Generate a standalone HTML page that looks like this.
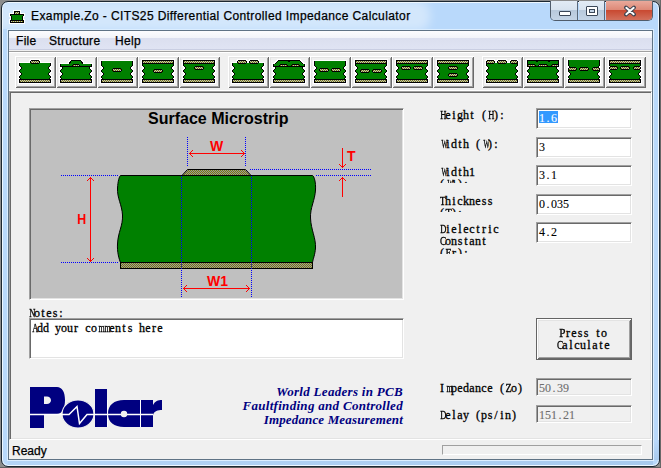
<!DOCTYPE html>
<html><head><meta charset="utf-8"><style>
*{margin:0;padding:0;box-sizing:border-box}
html,body{width:661px;height:468px;overflow:hidden}
body{position:relative;background:#8c8c8c;font-family:"Liberation Sans",sans-serif;}
.a{position:absolute}
.ss{position:absolute;font-family:"Liberation Serif",serif;font-size:12px;line-height:12px;white-space:pre;color:#000;margin-top:-1px;margin-left:-1px;-webkit-text-stroke:0.3px currentColor}
.ss b{display:inline-block;width:6px;text-align:center;font-weight:normal}
.ss i{display:inline-block;font-style:normal}
.tb{position:absolute;background:#fff;border-top:1px solid #a0a0a0;border-left:1px solid #a0a0a0;border-right:1px solid #fff;border-bottom:1px solid #fff;box-shadow:inset 1px 1px 0 #696969, inset -1px -1px 0 #e3e3e3}
.btn{position:absolute;top:56px;width:41px;height:32px;background:#f0f0f0;box-shadow:inset 1px 1px 0 #fff, inset -1px -1px 0 #696969, inset 2px 2px 0 #e3e3e3, inset -2px -2px 0 #a0a0a0}
.btn svg{position:absolute;left:0;top:0}
</style></head><body>

<div class="a" style="left:660px;top:0;width:1px;height:468px;background:#686868"></div>
<div class="a" style="left:0;top:467px;width:661px;height:1px;background:#606060"></div>
<div class="a" style="left:1px;top:1px;width:659px;height:466px;border:1px solid #1c2731;border-radius:7px;background:#b9d9fb;box-shadow:inset 0 0 0 1px #eef7ff"></div>
<div class="a" style="left:653px;top:440px;width:6px;height:20px;background:linear-gradient(#b9d9fb,#a8caee)"></div>
<div class="a" style="left:8px;top:460px;width:645px;height:5px;background:linear-gradient(to right,#b4d4f6,#a8caee)"></div>
<div class="a" style="left:3px;top:3px;width:600px;height:26px;overflow:hidden;border-radius:5px 0 0 0"><div class="a" style="left:-10px;top:-2px;width:437px;height:30px;border-radius:12px;background:rgba(255,255,255,0.38);filter:blur(5px)"></div></div>
<svg class="a" style="left:9px;top:10px" width="16" height="14" viewBox="0 0 16 14" shape-rendering="crispEdges" overflow="visible"><g filter="url(#halo)"><rect x="5" y="1" width="6" height="4" fill="#000" /><rect x="6" y="2" width="4" height="2" fill="url(#dt)" /><rect x="1" y="4" width="14" height="2" fill="#000" /><rect x="2" y="6" width="12" height="4" fill="#000" /><rect x="1" y="10" width="14" height="3" fill="#000" /><rect x="2" y="5" width="12" height="1" fill="#008000" /><rect x="3" y="6" width="10" height="4" fill="#008000" /><rect x="2" y="11" width="12" height="1" fill="url(#dt)" /></g></svg>
<div class="a" style="left:31px;top:9px;font-size:12px;line-height:15px;color:#000;-webkit-text-stroke:0.25px #000;white-space:pre;letter-spacing:0.4px" id="ttl">Example.Zo - CITS25 Differential Controlled Impedance Calculator</div>
<div class="a" style="left:550px;top:1px;width:103px;height:20px;border:1px solid #4f5c6b;border-top:none;border-radius:0 0 5px 5px;overflow:hidden"><div class="a" style="left:0;top:0;width:27px;height:19px;background:linear-gradient(#e2ebf5 0%,#d8e3ef 45%,#b8c9dc 50%,#c4d4e6 100%);border-right:1px solid #59687a"></div><div class="a" style="left:28px;top:0;width:26px;height:19px;background:linear-gradient(#e2ebf5 0%,#d8e3ef 45%,#b8c9dc 50%,#c4d4e6 100%);border-right:1px solid #59687a"></div><div class="a" style="left:55px;top:0;width:47px;height:19px;background:linear-gradient(#e9a99b 0%,#de8a78 45%,#c94a32 50%,#d2705c 100%)"></div></div>
<div class="a" style="left:559px;top:11px;width:12px;height:5px;background:#fff;border:1px solid #3b4758;border-radius:1px"></div>
<div class="a" style="left:586px;top:6px;width:12px;height:10px;background:#fff;border:1px solid #3b4758;border-radius:1px"></div>
<div class="a" style="left:589px;top:9px;width:6px;height:4px;background:#c6d6e8;border:1px solid #3b4758"></div>
<svg class="a" style="left:622px;top:5px" width="16" height="12" viewBox="0 0 16 12"><path d="M4 2.5 L12 9.5 M12 2.5 L4 9.5" stroke="#3c4350" stroke-width="3.8" stroke-linecap="round"/><path d="M4.3 2.8 L11.7 9.2 M11.7 2.8 L4.3 9.2" stroke="#fff" stroke-width="2.0" stroke-linecap="round"/></svg>
<div class="a" style="left:8px;top:30px;width:645px;height:430px;border:1px solid #5f7385;background:#f0f0f0;box-shadow:0 0 0 1px #dceeff"></div>
<div class="a" style="left:9px;top:31px;width:643px;height:18px;background:linear-gradient(#fcfcfe 0%,#f2f4f9 38%,#dbdfef 40%,#e0e4f3 100%)"></div>
<div class="a" style="left:9px;top:49px;width:643px;height:1px;background:#c9cee2"></div>
<div class="a" style="left:16px;top:34px;font-size:12px;line-height:15px;letter-spacing:0.3px;color:#000;-webkit-text-stroke:0.25px #000">File</div>
<div class="a" style="left:49px;top:34px;font-size:12px;line-height:15px;letter-spacing:0.3px;color:#000;-webkit-text-stroke:0.25px #000">Structure</div>
<div class="a" style="left:115px;top:34px;font-size:12px;line-height:15px;letter-spacing:0.3px;color:#000;-webkit-text-stroke:0.25px #000">Help</div>
<div class="a" style="left:9px;top:51px;width:643px;height:1px;background:#a0a0a0"></div>
<div class="a" style="left:9px;top:52px;width:643px;height:1px;background:#fff"></div>
<div class="a" style="left:9px;top:90px;width:643px;height:1px;background:#fff"></div>
<div class="btn" style="left:15px"><svg width="41" height="32" viewBox="0 0 41 32" shape-rendering="crispEdges"><defs><filter id="halo" x="-20%" y="-20%" width="140%" height="140%"><feMorphology in="SourceAlpha" operator="dilate" radius="1" result="d"/><feFlood flood-color="#fff"/><feComposite in2="d" operator="in" result="w"/><feMerge><feMergeNode in="w"/><feMergeNode in="SourceGraphic"/></feMerge></filter><pattern id="dt" width="2" height="2" patternUnits="userSpaceOnUse"><rect width="2" height="2" fill="#b8b8cc"/><rect width="1" height="1" fill="#808000"/><rect x="1" y="1" width="1" height="1" fill="#808000"/></pattern></defs><g filter="url(#halo)"><rect x="4" y="7" width="32" height="1" fill="#000" /><rect x="5" y="7" width="30" height="1" fill="#008000" /><rect x="4" y="8" width="32" height="1" fill="#000" /><rect x="5" y="8" width="30" height="1" fill="#008000" /><rect x="4" y="9" width="32" height="1" fill="#000" /><rect x="5" y="9" width="30" height="1" fill="#008000" /><rect x="5" y="10" width="30" height="1" fill="#000" /><rect x="6" y="10" width="28" height="1" fill="#008000" /><rect x="6" y="11" width="28" height="1" fill="#000" /><rect x="7" y="11" width="26" height="1" fill="#008000" /><rect x="6" y="12" width="28" height="1" fill="#000" /><rect x="7" y="12" width="26" height="1" fill="#008000" /><rect x="5" y="13" width="30" height="1" fill="#000" /><rect x="6" y="13" width="28" height="1" fill="#008000" /><rect x="4" y="14" width="32" height="1" fill="#000" /><rect x="5" y="14" width="30" height="1" fill="#008000" /><rect x="4" y="15" width="32" height="1" fill="#000" /><rect x="5" y="15" width="30" height="1" fill="#008000" /><rect x="5" y="16" width="30" height="1" fill="#000" /><rect x="6" y="16" width="28" height="1" fill="#008000" /><rect x="6" y="17" width="28" height="1" fill="#000" /><rect x="7" y="17" width="26" height="1" fill="#008000" /><rect x="6" y="18" width="28" height="1" fill="#000" /><rect x="7" y="18" width="26" height="1" fill="#008000" /><rect x="5" y="19" width="30" height="1" fill="#000" /><rect x="6" y="19" width="28" height="1" fill="#008000" /><rect x="4" y="20" width="32" height="1" fill="#000" /><rect x="5" y="20" width="30" height="1" fill="#008000" /><rect x="4" y="21" width="32" height="1" fill="#000" /><rect x="5" y="21" width="30" height="1" fill="#008000" /><rect x="5" y="22" width="30" height="1" fill="#000" /><rect x="6" y="22" width="28" height="1" fill="#008000" /><rect x="4" y="23" width="32" height="4" fill="#000" /><rect x="5" y="24" width="30" height="2" fill="url(#dt)" /><rect x="16" y="4" width="8" height="4" fill="#000" /><rect x="15" y="5" width="10" height="2" fill="#000" /><rect x="16" y="5" width="8" height="2" fill="url(#dt)" /></g></svg></div>
<div class="btn" style="left:56px"><svg width="41" height="32" viewBox="0 0 41 32" shape-rendering="crispEdges"><g filter="url(#halo)"><rect x="4" y="8" width="32" height="1" fill="#000" /><rect x="5" y="8" width="30" height="1" fill="#008000" /><rect x="4" y="9" width="32" height="1" fill="#000" /><rect x="5" y="9" width="30" height="1" fill="#008000" /><rect x="5" y="10" width="30" height="1" fill="#000" /><rect x="6" y="10" width="28" height="1" fill="#008000" /><rect x="6" y="11" width="28" height="1" fill="#000" /><rect x="7" y="11" width="26" height="1" fill="#008000" /><rect x="6" y="12" width="28" height="1" fill="#000" /><rect x="7" y="12" width="26" height="1" fill="#008000" /><rect x="5" y="13" width="30" height="1" fill="#000" /><rect x="6" y="13" width="28" height="1" fill="#008000" /><rect x="4" y="14" width="32" height="1" fill="#000" /><rect x="5" y="14" width="30" height="1" fill="#008000" /><rect x="4" y="15" width="32" height="1" fill="#000" /><rect x="5" y="15" width="30" height="1" fill="#008000" /><rect x="5" y="16" width="30" height="1" fill="#000" /><rect x="6" y="16" width="28" height="1" fill="#008000" /><rect x="6" y="17" width="28" height="1" fill="#000" /><rect x="7" y="17" width="26" height="1" fill="#008000" /><rect x="6" y="18" width="28" height="1" fill="#000" /><rect x="7" y="18" width="26" height="1" fill="#008000" /><rect x="5" y="19" width="30" height="1" fill="#000" /><rect x="6" y="19" width="28" height="1" fill="#008000" /><rect x="4" y="20" width="32" height="1" fill="#000" /><rect x="5" y="20" width="30" height="1" fill="#008000" /><rect x="4" y="21" width="32" height="1" fill="#000" /><rect x="5" y="21" width="30" height="1" fill="#008000" /><rect x="5" y="22" width="30" height="1" fill="#000" /><rect x="6" y="22" width="28" height="1" fill="#008000" /><rect x="4" y="23" width="32" height="4" fill="#000" /><rect x="5" y="24" width="30" height="2" fill="url(#dt)" /><path d="M12.5 8.5 L15.5 4.5 H24.5 L27.5 8.5" fill="#008000" stroke="#000" stroke-width="1"/><rect x="5" y="9" width="30" height="1" fill="#008000" /><rect x="4" y="10" width="32" height="1" fill="#000" /><rect x="17" y="8" width="6" height="3" fill="#000" /><rect x="16" y="9" width="8" height="1" fill="#000" /><rect x="17" y="9" width="6" height="1" fill="url(#dt)" /></g></svg></div>
<div class="btn" style="left:97px"><svg width="41" height="32" viewBox="0 0 41 32" shape-rendering="crispEdges"><g filter="url(#halo)"><rect x="4" y="5" width="32" height="1" fill="#000" /><rect x="5" y="5" width="30" height="1" fill="#008000" /><rect x="4" y="6" width="32" height="1" fill="#000" /><rect x="5" y="6" width="30" height="1" fill="#008000" /><rect x="4" y="7" width="32" height="1" fill="#000" /><rect x="5" y="7" width="30" height="1" fill="#008000" /><rect x="4" y="8" width="32" height="1" fill="#000" /><rect x="5" y="8" width="30" height="1" fill="#008000" /><rect x="4" y="9" width="32" height="1" fill="#000" /><rect x="5" y="9" width="30" height="1" fill="#008000" /><rect x="5" y="10" width="30" height="1" fill="#000" /><rect x="6" y="10" width="28" height="1" fill="#008000" /><rect x="6" y="11" width="28" height="1" fill="#000" /><rect x="7" y="11" width="26" height="1" fill="#008000" /><rect x="6" y="12" width="28" height="1" fill="#000" /><rect x="7" y="12" width="26" height="1" fill="#008000" /><rect x="5" y="13" width="30" height="1" fill="#000" /><rect x="6" y="13" width="28" height="1" fill="#008000" /><rect x="4" y="14" width="32" height="1" fill="#000" /><rect x="5" y="14" width="30" height="1" fill="#008000" /><rect x="4" y="15" width="32" height="1" fill="#000" /><rect x="5" y="15" width="30" height="1" fill="#008000" /><rect x="5" y="16" width="30" height="1" fill="#000" /><rect x="6" y="16" width="28" height="1" fill="#008000" /><rect x="6" y="17" width="28" height="1" fill="#000" /><rect x="7" y="17" width="26" height="1" fill="#008000" /><rect x="6" y="18" width="28" height="1" fill="#000" /><rect x="7" y="18" width="26" height="1" fill="#008000" /><rect x="5" y="19" width="30" height="1" fill="#000" /><rect x="6" y="19" width="28" height="1" fill="#008000" /><rect x="4" y="20" width="32" height="1" fill="#000" /><rect x="5" y="20" width="30" height="1" fill="#008000" /><rect x="4" y="21" width="32" height="1" fill="#000" /><rect x="5" y="21" width="30" height="1" fill="#008000" /><rect x="5" y="22" width="30" height="1" fill="#000" /><rect x="6" y="22" width="28" height="1" fill="#008000" /><rect x="4" y="23" width="32" height="4" fill="#000" /><rect x="5" y="24" width="30" height="2" fill="url(#dt)" /><rect x="16" y="12" width="8" height="4" fill="#000" /><rect x="15" y="13" width="10" height="2" fill="#000" /><rect x="16" y="13" width="8" height="2" fill="url(#dt)" /></g></svg></div>
<div class="btn" style="left:138px"><svg width="41" height="32" viewBox="0 0 41 32" shape-rendering="crispEdges"><g filter="url(#halo)"><rect x="4" y="4" width="32" height="4" fill="#000" /><rect x="5" y="5" width="30" height="2" fill="url(#dt)" /><rect x="4" y="8" width="32" height="1" fill="#000" /><rect x="5" y="8" width="30" height="1" fill="#008000" /><rect x="4" y="9" width="32" height="1" fill="#000" /><rect x="5" y="9" width="30" height="1" fill="#008000" /><rect x="5" y="10" width="30" height="1" fill="#000" /><rect x="6" y="10" width="28" height="1" fill="#008000" /><rect x="6" y="11" width="28" height="1" fill="#000" /><rect x="7" y="11" width="26" height="1" fill="#008000" /><rect x="6" y="12" width="28" height="1" fill="#000" /><rect x="7" y="12" width="26" height="1" fill="#008000" /><rect x="5" y="13" width="30" height="1" fill="#000" /><rect x="6" y="13" width="28" height="1" fill="#008000" /><rect x="4" y="14" width="32" height="1" fill="#000" /><rect x="5" y="14" width="30" height="1" fill="#008000" /><rect x="4" y="15" width="32" height="1" fill="#000" /><rect x="5" y="15" width="30" height="1" fill="#008000" /><rect x="5" y="16" width="30" height="1" fill="#000" /><rect x="6" y="16" width="28" height="1" fill="#008000" /><rect x="6" y="17" width="28" height="1" fill="#000" /><rect x="7" y="17" width="26" height="1" fill="#008000" /><rect x="6" y="18" width="28" height="1" fill="#000" /><rect x="7" y="18" width="26" height="1" fill="#008000" /><rect x="5" y="19" width="30" height="1" fill="#000" /><rect x="6" y="19" width="28" height="1" fill="#008000" /><rect x="4" y="20" width="32" height="1" fill="#000" /><rect x="5" y="20" width="30" height="1" fill="#008000" /><rect x="4" y="21" width="32" height="1" fill="#000" /><rect x="5" y="21" width="30" height="1" fill="#008000" /><rect x="5" y="22" width="30" height="1" fill="#000" /><rect x="6" y="22" width="28" height="1" fill="#008000" /><rect x="4" y="23" width="32" height="4" fill="#000" /><rect x="5" y="24" width="30" height="2" fill="url(#dt)" /><rect x="16" y="13" width="8" height="4" fill="#000" /><rect x="15" y="14" width="10" height="2" fill="#000" /><rect x="16" y="14" width="8" height="2" fill="url(#dt)" /></g></svg></div>
<div class="btn" style="left:179px"><svg width="41" height="32" viewBox="0 0 41 32" shape-rendering="crispEdges"><g filter="url(#halo)"><rect x="4" y="4" width="32" height="4" fill="#000" /><rect x="5" y="5" width="30" height="2" fill="url(#dt)" /><rect x="4" y="8" width="32" height="1" fill="#000" /><rect x="5" y="8" width="30" height="1" fill="#008000" /><rect x="4" y="9" width="32" height="1" fill="#000" /><rect x="5" y="9" width="30" height="1" fill="#008000" /><rect x="5" y="10" width="30" height="1" fill="#000" /><rect x="6" y="10" width="28" height="1" fill="#008000" /><rect x="6" y="11" width="28" height="1" fill="#000" /><rect x="7" y="11" width="26" height="1" fill="#008000" /><rect x="6" y="12" width="28" height="1" fill="#000" /><rect x="7" y="12" width="26" height="1" fill="#008000" /><rect x="5" y="13" width="30" height="1" fill="#000" /><rect x="6" y="13" width="28" height="1" fill="#008000" /><rect x="4" y="14" width="32" height="1" fill="#000" /><rect x="5" y="14" width="30" height="1" fill="#008000" /><rect x="4" y="15" width="32" height="1" fill="#000" /><rect x="5" y="15" width="30" height="1" fill="#008000" /><rect x="5" y="16" width="30" height="1" fill="#000" /><rect x="6" y="16" width="28" height="1" fill="#008000" /><rect x="6" y="17" width="28" height="1" fill="#000" /><rect x="7" y="17" width="26" height="1" fill="#008000" /><rect x="6" y="18" width="28" height="1" fill="#000" /><rect x="7" y="18" width="26" height="1" fill="#008000" /><rect x="5" y="19" width="30" height="1" fill="#000" /><rect x="6" y="19" width="28" height="1" fill="#008000" /><rect x="4" y="20" width="32" height="1" fill="#000" /><rect x="5" y="20" width="30" height="1" fill="#008000" /><rect x="4" y="21" width="32" height="1" fill="#000" /><rect x="5" y="21" width="30" height="1" fill="#008000" /><rect x="5" y="22" width="30" height="1" fill="#000" /><rect x="6" y="22" width="28" height="1" fill="#008000" /><rect x="4" y="23" width="32" height="4" fill="#000" /><rect x="5" y="24" width="30" height="2" fill="url(#dt)" /><rect x="16" y="10" width="8" height="4" fill="#000" /><rect x="15" y="11" width="10" height="2" fill="#000" /><rect x="16" y="11" width="8" height="2" fill="url(#dt)" /></g></svg></div>
<div class="btn" style="left:228px"><svg width="41" height="32" viewBox="0 0 41 32" shape-rendering="crispEdges"><g filter="url(#halo)"><rect x="4" y="7" width="32" height="1" fill="#000" /><rect x="5" y="7" width="30" height="1" fill="#008000" /><rect x="4" y="8" width="32" height="1" fill="#000" /><rect x="5" y="8" width="30" height="1" fill="#008000" /><rect x="4" y="9" width="32" height="1" fill="#000" /><rect x="5" y="9" width="30" height="1" fill="#008000" /><rect x="5" y="10" width="30" height="1" fill="#000" /><rect x="6" y="10" width="28" height="1" fill="#008000" /><rect x="6" y="11" width="28" height="1" fill="#000" /><rect x="7" y="11" width="26" height="1" fill="#008000" /><rect x="6" y="12" width="28" height="1" fill="#000" /><rect x="7" y="12" width="26" height="1" fill="#008000" /><rect x="5" y="13" width="30" height="1" fill="#000" /><rect x="6" y="13" width="28" height="1" fill="#008000" /><rect x="4" y="14" width="32" height="1" fill="#000" /><rect x="5" y="14" width="30" height="1" fill="#008000" /><rect x="4" y="15" width="32" height="1" fill="#000" /><rect x="5" y="15" width="30" height="1" fill="#008000" /><rect x="5" y="16" width="30" height="1" fill="#000" /><rect x="6" y="16" width="28" height="1" fill="#008000" /><rect x="6" y="17" width="28" height="1" fill="#000" /><rect x="7" y="17" width="26" height="1" fill="#008000" /><rect x="6" y="18" width="28" height="1" fill="#000" /><rect x="7" y="18" width="26" height="1" fill="#008000" /><rect x="5" y="19" width="30" height="1" fill="#000" /><rect x="6" y="19" width="28" height="1" fill="#008000" /><rect x="4" y="20" width="32" height="1" fill="#000" /><rect x="5" y="20" width="30" height="1" fill="#008000" /><rect x="4" y="21" width="32" height="1" fill="#000" /><rect x="5" y="21" width="30" height="1" fill="#008000" /><rect x="5" y="22" width="30" height="1" fill="#000" /><rect x="6" y="22" width="28" height="1" fill="#008000" /><rect x="4" y="23" width="32" height="4" fill="#000" /><rect x="5" y="24" width="30" height="2" fill="url(#dt)" /><rect x="10" y="4" width="8" height="4" fill="#000" /><rect x="9" y="5" width="10" height="2" fill="#000" /><rect x="10" y="5" width="8" height="2" fill="url(#dt)" /><rect x="22" y="4" width="8" height="4" fill="#000" /><rect x="21" y="5" width="10" height="2" fill="#000" /><rect x="22" y="5" width="8" height="2" fill="url(#dt)" /></g></svg></div>
<div class="btn" style="left:269px"><svg width="41" height="32" viewBox="0 0 41 32" shape-rendering="crispEdges"><g filter="url(#halo)"><rect x="4" y="8" width="32" height="1" fill="#000" /><rect x="5" y="8" width="30" height="1" fill="#008000" /><rect x="4" y="9" width="32" height="1" fill="#000" /><rect x="5" y="9" width="30" height="1" fill="#008000" /><rect x="5" y="10" width="30" height="1" fill="#000" /><rect x="6" y="10" width="28" height="1" fill="#008000" /><rect x="6" y="11" width="28" height="1" fill="#000" /><rect x="7" y="11" width="26" height="1" fill="#008000" /><rect x="6" y="12" width="28" height="1" fill="#000" /><rect x="7" y="12" width="26" height="1" fill="#008000" /><rect x="5" y="13" width="30" height="1" fill="#000" /><rect x="6" y="13" width="28" height="1" fill="#008000" /><rect x="4" y="14" width="32" height="1" fill="#000" /><rect x="5" y="14" width="30" height="1" fill="#008000" /><rect x="4" y="15" width="32" height="1" fill="#000" /><rect x="5" y="15" width="30" height="1" fill="#008000" /><rect x="5" y="16" width="30" height="1" fill="#000" /><rect x="6" y="16" width="28" height="1" fill="#008000" /><rect x="6" y="17" width="28" height="1" fill="#000" /><rect x="7" y="17" width="26" height="1" fill="#008000" /><rect x="6" y="18" width="28" height="1" fill="#000" /><rect x="7" y="18" width="26" height="1" fill="#008000" /><rect x="5" y="19" width="30" height="1" fill="#000" /><rect x="6" y="19" width="28" height="1" fill="#008000" /><rect x="4" y="20" width="32" height="1" fill="#000" /><rect x="5" y="20" width="30" height="1" fill="#008000" /><rect x="4" y="21" width="32" height="1" fill="#000" /><rect x="5" y="21" width="30" height="1" fill="#008000" /><rect x="5" y="22" width="30" height="1" fill="#000" /><rect x="6" y="22" width="28" height="1" fill="#008000" /><rect x="4" y="23" width="32" height="4" fill="#000" /><rect x="5" y="24" width="30" height="2" fill="url(#dt)" /><path d="M5.5 8.5 L9.5 4.5 H19.5 L20 5.5 L20.5 4.5 H30.5 L34.5 8.5" fill="#008000" stroke="#000" stroke-width="1"/><rect x="5" y="9" width="30" height="1" fill="#008000" /><rect x="4" y="10" width="32" height="1" fill="#000" /><rect x="11" y="8" width="7" height="3" fill="#000" /><rect x="10" y="9" width="9" height="1" fill="#000" /><rect x="11" y="9" width="7" height="1" fill="url(#dt)" /><rect x="23" y="8" width="7" height="3" fill="#000" /><rect x="22" y="9" width="9" height="1" fill="#000" /><rect x="23" y="9" width="7" height="1" fill="url(#dt)" /></g></svg></div>
<div class="btn" style="left:310px"><svg width="41" height="32" viewBox="0 0 41 32" shape-rendering="crispEdges"><g filter="url(#halo)"><rect x="4" y="5" width="32" height="1" fill="#000" /><rect x="5" y="5" width="30" height="1" fill="#008000" /><rect x="4" y="6" width="32" height="1" fill="#000" /><rect x="5" y="6" width="30" height="1" fill="#008000" /><rect x="4" y="7" width="32" height="1" fill="#000" /><rect x="5" y="7" width="30" height="1" fill="#008000" /><rect x="4" y="8" width="32" height="1" fill="#000" /><rect x="5" y="8" width="30" height="1" fill="#008000" /><rect x="4" y="9" width="32" height="1" fill="#000" /><rect x="5" y="9" width="30" height="1" fill="#008000" /><rect x="5" y="10" width="30" height="1" fill="#000" /><rect x="6" y="10" width="28" height="1" fill="#008000" /><rect x="6" y="11" width="28" height="1" fill="#000" /><rect x="7" y="11" width="26" height="1" fill="#008000" /><rect x="6" y="12" width="28" height="1" fill="#000" /><rect x="7" y="12" width="26" height="1" fill="#008000" /><rect x="5" y="13" width="30" height="1" fill="#000" /><rect x="6" y="13" width="28" height="1" fill="#008000" /><rect x="4" y="14" width="32" height="1" fill="#000" /><rect x="5" y="14" width="30" height="1" fill="#008000" /><rect x="4" y="15" width="32" height="1" fill="#000" /><rect x="5" y="15" width="30" height="1" fill="#008000" /><rect x="5" y="16" width="30" height="1" fill="#000" /><rect x="6" y="16" width="28" height="1" fill="#008000" /><rect x="6" y="17" width="28" height="1" fill="#000" /><rect x="7" y="17" width="26" height="1" fill="#008000" /><rect x="6" y="18" width="28" height="1" fill="#000" /><rect x="7" y="18" width="26" height="1" fill="#008000" /><rect x="5" y="19" width="30" height="1" fill="#000" /><rect x="6" y="19" width="28" height="1" fill="#008000" /><rect x="4" y="20" width="32" height="1" fill="#000" /><rect x="5" y="20" width="30" height="1" fill="#008000" /><rect x="4" y="21" width="32" height="1" fill="#000" /><rect x="5" y="21" width="30" height="1" fill="#008000" /><rect x="5" y="22" width="30" height="1" fill="#000" /><rect x="6" y="22" width="28" height="1" fill="#008000" /><rect x="4" y="23" width="32" height="4" fill="#000" /><rect x="5" y="24" width="30" height="2" fill="url(#dt)" /><rect x="10" y="12" width="8" height="4" fill="#000" /><rect x="9" y="13" width="10" height="2" fill="#000" /><rect x="10" y="13" width="8" height="2" fill="url(#dt)" /><rect x="22" y="12" width="8" height="4" fill="#000" /><rect x="21" y="13" width="10" height="2" fill="#000" /><rect x="22" y="13" width="8" height="2" fill="url(#dt)" /></g></svg></div>
<div class="btn" style="left:351px"><svg width="41" height="32" viewBox="0 0 41 32" shape-rendering="crispEdges"><g filter="url(#halo)"><rect x="4" y="4" width="32" height="4" fill="#000" /><rect x="5" y="5" width="30" height="2" fill="url(#dt)" /><rect x="4" y="8" width="32" height="1" fill="#000" /><rect x="5" y="8" width="30" height="1" fill="#008000" /><rect x="4" y="9" width="32" height="1" fill="#000" /><rect x="5" y="9" width="30" height="1" fill="#008000" /><rect x="5" y="10" width="30" height="1" fill="#000" /><rect x="6" y="10" width="28" height="1" fill="#008000" /><rect x="6" y="11" width="28" height="1" fill="#000" /><rect x="7" y="11" width="26" height="1" fill="#008000" /><rect x="6" y="12" width="28" height="1" fill="#000" /><rect x="7" y="12" width="26" height="1" fill="#008000" /><rect x="5" y="13" width="30" height="1" fill="#000" /><rect x="6" y="13" width="28" height="1" fill="#008000" /><rect x="4" y="14" width="32" height="1" fill="#000" /><rect x="5" y="14" width="30" height="1" fill="#008000" /><rect x="4" y="15" width="32" height="1" fill="#000" /><rect x="5" y="15" width="30" height="1" fill="#008000" /><rect x="5" y="16" width="30" height="1" fill="#000" /><rect x="6" y="16" width="28" height="1" fill="#008000" /><rect x="6" y="17" width="28" height="1" fill="#000" /><rect x="7" y="17" width="26" height="1" fill="#008000" /><rect x="6" y="18" width="28" height="1" fill="#000" /><rect x="7" y="18" width="26" height="1" fill="#008000" /><rect x="5" y="19" width="30" height="1" fill="#000" /><rect x="6" y="19" width="28" height="1" fill="#008000" /><rect x="4" y="20" width="32" height="1" fill="#000" /><rect x="5" y="20" width="30" height="1" fill="#008000" /><rect x="4" y="21" width="32" height="1" fill="#000" /><rect x="5" y="21" width="30" height="1" fill="#008000" /><rect x="5" y="22" width="30" height="1" fill="#000" /><rect x="6" y="22" width="28" height="1" fill="#008000" /><rect x="4" y="23" width="32" height="4" fill="#000" /><rect x="5" y="24" width="30" height="2" fill="url(#dt)" /><rect x="10" y="13" width="8" height="4" fill="#000" /><rect x="9" y="14" width="10" height="2" fill="#000" /><rect x="10" y="14" width="8" height="2" fill="url(#dt)" /><rect x="22" y="13" width="8" height="4" fill="#000" /><rect x="21" y="14" width="10" height="2" fill="#000" /><rect x="22" y="14" width="8" height="2" fill="url(#dt)" /></g></svg></div>
<div class="btn" style="left:392px"><svg width="41" height="32" viewBox="0 0 41 32" shape-rendering="crispEdges"><g filter="url(#halo)"><rect x="4" y="4" width="32" height="4" fill="#000" /><rect x="5" y="5" width="30" height="2" fill="url(#dt)" /><rect x="4" y="8" width="32" height="1" fill="#000" /><rect x="5" y="8" width="30" height="1" fill="#008000" /><rect x="4" y="9" width="32" height="1" fill="#000" /><rect x="5" y="9" width="30" height="1" fill="#008000" /><rect x="5" y="10" width="30" height="1" fill="#000" /><rect x="6" y="10" width="28" height="1" fill="#008000" /><rect x="6" y="11" width="28" height="1" fill="#000" /><rect x="7" y="11" width="26" height="1" fill="#008000" /><rect x="6" y="12" width="28" height="1" fill="#000" /><rect x="7" y="12" width="26" height="1" fill="#008000" /><rect x="5" y="13" width="30" height="1" fill="#000" /><rect x="6" y="13" width="28" height="1" fill="#008000" /><rect x="4" y="14" width="32" height="1" fill="#000" /><rect x="5" y="14" width="30" height="1" fill="#008000" /><rect x="4" y="15" width="32" height="1" fill="#000" /><rect x="5" y="15" width="30" height="1" fill="#008000" /><rect x="5" y="16" width="30" height="1" fill="#000" /><rect x="6" y="16" width="28" height="1" fill="#008000" /><rect x="6" y="17" width="28" height="1" fill="#000" /><rect x="7" y="17" width="26" height="1" fill="#008000" /><rect x="6" y="18" width="28" height="1" fill="#000" /><rect x="7" y="18" width="26" height="1" fill="#008000" /><rect x="5" y="19" width="30" height="1" fill="#000" /><rect x="6" y="19" width="28" height="1" fill="#008000" /><rect x="4" y="20" width="32" height="1" fill="#000" /><rect x="5" y="20" width="30" height="1" fill="#008000" /><rect x="4" y="21" width="32" height="1" fill="#000" /><rect x="5" y="21" width="30" height="1" fill="#008000" /><rect x="5" y="22" width="30" height="1" fill="#000" /><rect x="6" y="22" width="28" height="1" fill="#008000" /><rect x="4" y="23" width="32" height="4" fill="#000" /><rect x="5" y="24" width="30" height="2" fill="url(#dt)" /><rect x="10" y="10" width="8" height="4" fill="#000" /><rect x="9" y="11" width="10" height="2" fill="#000" /><rect x="10" y="11" width="8" height="2" fill="url(#dt)" /><rect x="22" y="10" width="8" height="4" fill="#000" /><rect x="21" y="11" width="10" height="2" fill="#000" /><rect x="22" y="11" width="8" height="2" fill="url(#dt)" /></g></svg></div>
<div class="btn" style="left:433px"><svg width="41" height="32" viewBox="0 0 41 32" shape-rendering="crispEdges"><g filter="url(#halo)"><rect x="4" y="4" width="32" height="4" fill="#000" /><rect x="5" y="5" width="30" height="2" fill="url(#dt)" /><rect x="4" y="8" width="32" height="1" fill="#000" /><rect x="5" y="8" width="30" height="1" fill="#008000" /><rect x="4" y="9" width="32" height="1" fill="#000" /><rect x="5" y="9" width="30" height="1" fill="#008000" /><rect x="5" y="10" width="30" height="1" fill="#000" /><rect x="6" y="10" width="28" height="1" fill="#008000" /><rect x="6" y="11" width="28" height="1" fill="#000" /><rect x="7" y="11" width="26" height="1" fill="#008000" /><rect x="6" y="12" width="28" height="1" fill="#000" /><rect x="7" y="12" width="26" height="1" fill="#008000" /><rect x="5" y="13" width="30" height="1" fill="#000" /><rect x="6" y="13" width="28" height="1" fill="#008000" /><rect x="4" y="14" width="32" height="1" fill="#000" /><rect x="5" y="14" width="30" height="1" fill="#008000" /><rect x="4" y="15" width="32" height="1" fill="#000" /><rect x="5" y="15" width="30" height="1" fill="#008000" /><rect x="5" y="16" width="30" height="1" fill="#000" /><rect x="6" y="16" width="28" height="1" fill="#008000" /><rect x="6" y="17" width="28" height="1" fill="#000" /><rect x="7" y="17" width="26" height="1" fill="#008000" /><rect x="6" y="18" width="28" height="1" fill="#000" /><rect x="7" y="18" width="26" height="1" fill="#008000" /><rect x="5" y="19" width="30" height="1" fill="#000" /><rect x="6" y="19" width="28" height="1" fill="#008000" /><rect x="4" y="20" width="32" height="1" fill="#000" /><rect x="5" y="20" width="30" height="1" fill="#008000" /><rect x="4" y="21" width="32" height="1" fill="#000" /><rect x="5" y="21" width="30" height="1" fill="#008000" /><rect x="5" y="22" width="30" height="1" fill="#000" /><rect x="6" y="22" width="28" height="1" fill="#008000" /><rect x="4" y="23" width="32" height="4" fill="#000" /><rect x="5" y="24" width="30" height="2" fill="url(#dt)" /><rect x="16" y="10" width="8" height="4" fill="#000" /><rect x="15" y="11" width="10" height="2" fill="#000" /><rect x="16" y="11" width="8" height="2" fill="url(#dt)" /><rect x="16" y="17" width="8" height="4" fill="#000" /><rect x="15" y="18" width="10" height="2" fill="#000" /><rect x="16" y="18" width="8" height="2" fill="url(#dt)" /></g></svg></div>
<div class="btn" style="left:482px"><svg width="41" height="32" viewBox="0 0 41 32" shape-rendering="crispEdges"><g filter="url(#halo)"><rect x="4" y="7" width="32" height="1" fill="#000" /><rect x="5" y="7" width="30" height="1" fill="#008000" /><rect x="4" y="8" width="32" height="1" fill="#000" /><rect x="5" y="8" width="30" height="1" fill="#008000" /><rect x="4" y="9" width="32" height="1" fill="#000" /><rect x="5" y="9" width="30" height="1" fill="#008000" /><rect x="5" y="10" width="30" height="1" fill="#000" /><rect x="6" y="10" width="28" height="1" fill="#008000" /><rect x="6" y="11" width="28" height="1" fill="#000" /><rect x="7" y="11" width="26" height="1" fill="#008000" /><rect x="6" y="12" width="28" height="1" fill="#000" /><rect x="7" y="12" width="26" height="1" fill="#008000" /><rect x="5" y="13" width="30" height="1" fill="#000" /><rect x="6" y="13" width="28" height="1" fill="#008000" /><rect x="4" y="14" width="32" height="1" fill="#000" /><rect x="5" y="14" width="30" height="1" fill="#008000" /><rect x="4" y="15" width="32" height="1" fill="#000" /><rect x="5" y="15" width="30" height="1" fill="#008000" /><rect x="5" y="16" width="30" height="1" fill="#000" /><rect x="6" y="16" width="28" height="1" fill="#008000" /><rect x="6" y="17" width="28" height="1" fill="#000" /><rect x="7" y="17" width="26" height="1" fill="#008000" /><rect x="6" y="18" width="28" height="1" fill="#000" /><rect x="7" y="18" width="26" height="1" fill="#008000" /><rect x="5" y="19" width="30" height="1" fill="#000" /><rect x="6" y="19" width="28" height="1" fill="#008000" /><rect x="4" y="20" width="32" height="1" fill="#000" /><rect x="5" y="20" width="30" height="1" fill="#008000" /><rect x="4" y="21" width="32" height="1" fill="#000" /><rect x="5" y="21" width="30" height="1" fill="#008000" /><rect x="5" y="22" width="30" height="1" fill="#000" /><rect x="6" y="22" width="28" height="1" fill="#008000" /><rect x="4" y="23" width="32" height="4" fill="#000" /><rect x="5" y="24" width="30" height="2" fill="url(#dt)" /><rect x="5" y="4" width="7" height="4" fill="#000" /><rect x="4" y="5" width="9" height="2" fill="#000" /><rect x="5" y="5" width="7" height="2" fill="url(#dt)" /><rect x="16" y="4" width="8" height="4" fill="#000" /><rect x="15" y="5" width="10" height="2" fill="#000" /><rect x="16" y="5" width="8" height="2" fill="url(#dt)" /><rect x="29" y="4" width="6" height="4" fill="#000" /><rect x="28" y="5" width="8" height="2" fill="#000" /><rect x="29" y="5" width="6" height="2" fill="url(#dt)" /></g></svg></div>
<div class="btn" style="left:523px"><svg width="41" height="32" viewBox="0 0 41 32" shape-rendering="crispEdges"><g filter="url(#halo)"><rect x="4" y="8" width="32" height="1" fill="#000" /><rect x="5" y="8" width="30" height="1" fill="#008000" /><rect x="4" y="9" width="32" height="1" fill="#000" /><rect x="5" y="9" width="30" height="1" fill="#008000" /><rect x="5" y="10" width="30" height="1" fill="#000" /><rect x="6" y="10" width="28" height="1" fill="#008000" /><rect x="6" y="11" width="28" height="1" fill="#000" /><rect x="7" y="11" width="26" height="1" fill="#008000" /><rect x="6" y="12" width="28" height="1" fill="#000" /><rect x="7" y="12" width="26" height="1" fill="#008000" /><rect x="5" y="13" width="30" height="1" fill="#000" /><rect x="6" y="13" width="28" height="1" fill="#008000" /><rect x="4" y="14" width="32" height="1" fill="#000" /><rect x="5" y="14" width="30" height="1" fill="#008000" /><rect x="4" y="15" width="32" height="1" fill="#000" /><rect x="5" y="15" width="30" height="1" fill="#008000" /><rect x="5" y="16" width="30" height="1" fill="#000" /><rect x="6" y="16" width="28" height="1" fill="#008000" /><rect x="6" y="17" width="28" height="1" fill="#000" /><rect x="7" y="17" width="26" height="1" fill="#008000" /><rect x="6" y="18" width="28" height="1" fill="#000" /><rect x="7" y="18" width="26" height="1" fill="#008000" /><rect x="5" y="19" width="30" height="1" fill="#000" /><rect x="6" y="19" width="28" height="1" fill="#008000" /><rect x="4" y="20" width="32" height="1" fill="#000" /><rect x="5" y="20" width="30" height="1" fill="#008000" /><rect x="4" y="21" width="32" height="1" fill="#000" /><rect x="5" y="21" width="30" height="1" fill="#008000" /><rect x="5" y="22" width="30" height="1" fill="#000" /><rect x="6" y="22" width="28" height="1" fill="#008000" /><rect x="4" y="23" width="32" height="4" fill="#000" /><rect x="5" y="24" width="30" height="2" fill="url(#dt)" /><path d="M4.5 8.5 V4.5 H13 L14 6 L15 4.5 H25 L26 6 L27 4.5 H35.5 V8.5" fill="#008000" stroke="#000" stroke-width="1"/><rect x="5" y="9" width="30" height="1" fill="#008000" /><rect x="4" y="10" width="32" height="1" fill="#000" /><rect x="5" y="8" width="7" height="3" fill="#000" /><rect x="4" y="9" width="9" height="1" fill="#000" /><rect x="5" y="9" width="7" height="1" fill="url(#dt)" /><rect x="16" y="8" width="8" height="3" fill="#000" /><rect x="15" y="9" width="10" height="1" fill="#000" /><rect x="16" y="9" width="8" height="1" fill="url(#dt)" /><rect x="29" y="8" width="6" height="3" fill="#000" /><rect x="28" y="9" width="8" height="1" fill="#000" /><rect x="29" y="9" width="6" height="1" fill="url(#dt)" /></g></svg></div>
<div class="btn" style="left:564px"><svg width="41" height="32" viewBox="0 0 41 32" shape-rendering="crispEdges"><g filter="url(#halo)"><rect x="4" y="4" width="32" height="1" fill="#000" /><rect x="5" y="4" width="30" height="1" fill="#008000" /><rect x="4" y="5" width="32" height="1" fill="#000" /><rect x="5" y="5" width="30" height="1" fill="#008000" /><rect x="4" y="6" width="32" height="1" fill="#000" /><rect x="5" y="6" width="30" height="1" fill="#008000" /><rect x="4" y="7" width="32" height="1" fill="#000" /><rect x="5" y="7" width="30" height="1" fill="#008000" /><rect x="4" y="8" width="32" height="1" fill="#000" /><rect x="5" y="8" width="30" height="1" fill="#008000" /><rect x="4" y="9" width="32" height="1" fill="#000" /><rect x="5" y="9" width="30" height="1" fill="#008000" /><rect x="5" y="10" width="30" height="1" fill="#000" /><rect x="6" y="10" width="28" height="1" fill="#008000" /><rect x="6" y="11" width="28" height="1" fill="#000" /><rect x="7" y="11" width="26" height="1" fill="#008000" /><rect x="6" y="12" width="28" height="1" fill="#000" /><rect x="7" y="12" width="26" height="1" fill="#008000" /><rect x="5" y="13" width="30" height="1" fill="#000" /><rect x="6" y="13" width="28" height="1" fill="#008000" /><rect x="4" y="14" width="32" height="1" fill="#000" /><rect x="5" y="14" width="30" height="1" fill="#008000" /><rect x="4" y="15" width="32" height="1" fill="#000" /><rect x="5" y="15" width="30" height="1" fill="#008000" /><rect x="5" y="16" width="30" height="1" fill="#000" /><rect x="6" y="16" width="28" height="1" fill="#008000" /><rect x="6" y="17" width="28" height="1" fill="#000" /><rect x="7" y="17" width="26" height="1" fill="#008000" /><rect x="6" y="18" width="28" height="1" fill="#000" /><rect x="7" y="18" width="26" height="1" fill="#008000" /><rect x="5" y="19" width="30" height="1" fill="#000" /><rect x="6" y="19" width="28" height="1" fill="#008000" /><rect x="4" y="20" width="32" height="1" fill="#000" /><rect x="5" y="20" width="30" height="1" fill="#008000" /><rect x="4" y="21" width="32" height="1" fill="#000" /><rect x="5" y="21" width="30" height="1" fill="#008000" /><rect x="5" y="22" width="30" height="1" fill="#000" /><rect x="6" y="22" width="28" height="1" fill="#008000" /><rect x="4" y="23" width="32" height="4" fill="#000" /><rect x="5" y="24" width="30" height="2" fill="url(#dt)" /><rect x="5" y="11" width="7" height="4" fill="#000" /><rect x="4" y="12" width="9" height="2" fill="#000" /><rect x="5" y="12" width="7" height="2" fill="url(#dt)" /><rect x="16" y="11" width="8" height="4" fill="#000" /><rect x="15" y="12" width="10" height="2" fill="#000" /><rect x="16" y="12" width="8" height="2" fill="url(#dt)" /><rect x="29" y="11" width="6" height="4" fill="#000" /><rect x="28" y="12" width="8" height="2" fill="#000" /><rect x="29" y="12" width="6" height="2" fill="url(#dt)" /></g></svg></div>
<div class="btn" style="left:605px"><svg width="41" height="32" viewBox="0 0 41 32" shape-rendering="crispEdges"><g filter="url(#halo)"><rect x="4" y="4" width="32" height="4" fill="#000" /><rect x="5" y="5" width="30" height="2" fill="url(#dt)" /><rect x="4" y="8" width="32" height="1" fill="#000" /><rect x="5" y="8" width="30" height="1" fill="#008000" /><rect x="4" y="9" width="32" height="1" fill="#000" /><rect x="5" y="9" width="30" height="1" fill="#008000" /><rect x="5" y="10" width="30" height="1" fill="#000" /><rect x="6" y="10" width="28" height="1" fill="#008000" /><rect x="6" y="11" width="28" height="1" fill="#000" /><rect x="7" y="11" width="26" height="1" fill="#008000" /><rect x="6" y="12" width="28" height="1" fill="#000" /><rect x="7" y="12" width="26" height="1" fill="#008000" /><rect x="5" y="13" width="30" height="1" fill="#000" /><rect x="6" y="13" width="28" height="1" fill="#008000" /><rect x="4" y="14" width="32" height="1" fill="#000" /><rect x="5" y="14" width="30" height="1" fill="#008000" /><rect x="4" y="15" width="32" height="1" fill="#000" /><rect x="5" y="15" width="30" height="1" fill="#008000" /><rect x="5" y="16" width="30" height="1" fill="#000" /><rect x="6" y="16" width="28" height="1" fill="#008000" /><rect x="6" y="17" width="28" height="1" fill="#000" /><rect x="7" y="17" width="26" height="1" fill="#008000" /><rect x="6" y="18" width="28" height="1" fill="#000" /><rect x="7" y="18" width="26" height="1" fill="#008000" /><rect x="5" y="19" width="30" height="1" fill="#000" /><rect x="6" y="19" width="28" height="1" fill="#008000" /><rect x="4" y="20" width="32" height="1" fill="#000" /><rect x="5" y="20" width="30" height="1" fill="#008000" /><rect x="4" y="21" width="32" height="1" fill="#000" /><rect x="5" y="21" width="30" height="1" fill="#008000" /><rect x="5" y="22" width="30" height="1" fill="#000" /><rect x="6" y="22" width="28" height="1" fill="#008000" /><rect x="4" y="23" width="32" height="4" fill="#000" /><rect x="5" y="24" width="30" height="2" fill="url(#dt)" /><rect x="5" y="10" width="7" height="4" fill="#000" /><rect x="4" y="11" width="9" height="2" fill="#000" /><rect x="5" y="11" width="7" height="2" fill="url(#dt)" /><rect x="16" y="10" width="8" height="4" fill="#000" /><rect x="15" y="11" width="10" height="2" fill="#000" /><rect x="16" y="11" width="8" height="2" fill="url(#dt)" /><rect x="29" y="10" width="6" height="4" fill="#000" /><rect x="28" y="11" width="8" height="2" fill="#000" /><rect x="29" y="11" width="6" height="2" fill="url(#dt)" /></g></svg></div>
<div class="a" style="left:9px;top:91px;width:643px;height:349px;border-top:1px solid #a0a0a0;border-left:1px solid #a0a0a0;border-right:1px solid #fff;border-bottom:1px solid #fff;box-shadow:inset 1px 1px 0 #696969, inset -1px -1px 0 #e3e3e3"></div>
<div class="a" style="left:29px;top:108px;width:375px;height:192px;background:#c0c0c0;border-top:1px solid #a0a0a0;border-left:1px solid #a0a0a0;border-right:1px solid #fff;border-bottom:1px solid #fff;box-shadow:inset 1px 1px 0 #696969, inset -1px -1px 0 #e3e3e3"></div>
<div class="a" style="left:148px;top:109px;font-weight:bold;font-size:16px;line-height:19px;color:#000" id="sm">Surface Microstrip</div>
<svg class="a" style="left:0;top:0" width="661" height="468" viewBox="0 0 661 468"><defs><pattern id="dt2" width="2" height="2" patternUnits="userSpaceOnUse"><rect width="2" height="2" fill="#9494a8"/><rect width="1" height="1" fill="#808000"/><rect x="1" y="1" width="1" height="1" fill="#808000"/></pattern></defs><path d="M120.5 175.5 H312.5 C314 176 316 182 315.5 190 C315 200 310 208 310.5 218 C311 230 316 238 315.5 248 C315 255 313 259 312.5 262.5 H120.5 C119 259 117 252 117.5 244 C118 232 123 226 122.5 215 C122 205 117 198 117.5 188 C118 181 119 177 120.5 175.5 Z" fill="#008000" stroke="#000" stroke-width="1"/><rect x="120.5" y="262.5" width="192" height="6" fill="url(#dt2)" stroke="#000" stroke-width="1"/><path d="M182 175.5 L187.5 169.5 H245.5 L251 175.5 Z" fill="url(#dt2)" stroke="#000" stroke-width="1"/><line x1="187.5" y1="137" x2="187.5" y2="167" stroke="#0000ff" stroke-width="1" stroke-dasharray="1 1" shape-rendering="crispEdges"/><line x1="245.5" y1="137" x2="245.5" y2="167" stroke="#0000ff" stroke-width="1" stroke-dasharray="1 1" shape-rendering="crispEdges"/><line x1="181.5" y1="176" x2="181.5" y2="297" stroke="#0000ff" stroke-width="1" stroke-dasharray="1 1" shape-rendering="crispEdges"/><line x1="251.5" y1="176" x2="251.5" y2="297" stroke="#0000ff" stroke-width="1" stroke-dasharray="1 1" shape-rendering="crispEdges"/><line x1="61" y1="175.5" x2="118" y2="175.5" stroke="#0000ff" stroke-width="1" stroke-dasharray="1 1" shape-rendering="crispEdges"/><line x1="61" y1="262.5" x2="118" y2="262.5" stroke="#0000ff" stroke-width="1" stroke-dasharray="1 1" shape-rendering="crispEdges"/><line x1="250" y1="169.5" x2="372" y2="169.5" stroke="#0000ff" stroke-width="1" stroke-dasharray="1 1" shape-rendering="crispEdges"/><line x1="316" y1="175.5" x2="372" y2="175.5" stroke="#0000ff" stroke-width="1" stroke-dasharray="1 1" shape-rendering="crispEdges"/><g shape-rendering="crispEdges"><rect x="189" y="153" width="56" height="1" fill="#ff0000"/><rect x="190" y="152" width="1" height="1" fill="#ff0000"/><rect x="190" y="154" width="1" height="1" fill="#ff0000"/><rect x="191" y="151" width="1" height="1" fill="#ff0000"/><rect x="191" y="155" width="1" height="1" fill="#ff0000"/><rect x="192" y="150" width="1" height="1" fill="#ff0000"/><rect x="192" y="156" width="1" height="1" fill="#ff0000"/><rect x="243" y="152" width="1" height="1" fill="#ff0000"/><rect x="243" y="154" width="1" height="1" fill="#ff0000"/><rect x="242" y="151" width="1" height="1" fill="#ff0000"/><rect x="242" y="155" width="1" height="1" fill="#ff0000"/><rect x="241" y="150" width="1" height="1" fill="#ff0000"/><rect x="241" y="156" width="1" height="1" fill="#ff0000"/></g><g shape-rendering="crispEdges"><rect x="183" y="288" width="67" height="1" fill="#ff0000"/><rect x="184" y="287" width="1" height="1" fill="#ff0000"/><rect x="184" y="289" width="1" height="1" fill="#ff0000"/><rect x="185" y="286" width="1" height="1" fill="#ff0000"/><rect x="185" y="290" width="1" height="1" fill="#ff0000"/><rect x="186" y="285" width="1" height="1" fill="#ff0000"/><rect x="186" y="291" width="1" height="1" fill="#ff0000"/><rect x="248" y="287" width="1" height="1" fill="#ff0000"/><rect x="248" y="289" width="1" height="1" fill="#ff0000"/><rect x="247" y="286" width="1" height="1" fill="#ff0000"/><rect x="247" y="290" width="1" height="1" fill="#ff0000"/><rect x="246" y="285" width="1" height="1" fill="#ff0000"/><rect x="246" y="291" width="1" height="1" fill="#ff0000"/></g><g shape-rendering="crispEdges"><rect x="90" y="177" width="1" height="85" fill="#ff0000"/><rect x="89" y="178" width="1" height="1" fill="#ff0000"/><rect x="91" y="178" width="1" height="1" fill="#ff0000"/><rect x="88" y="179" width="1" height="1" fill="#ff0000"/><rect x="92" y="179" width="1" height="1" fill="#ff0000"/><rect x="87" y="180" width="1" height="1" fill="#ff0000"/><rect x="93" y="180" width="1" height="1" fill="#ff0000"/><rect x="89" y="260" width="1" height="1" fill="#ff0000"/><rect x="91" y="260" width="1" height="1" fill="#ff0000"/><rect x="88" y="259" width="1" height="1" fill="#ff0000"/><rect x="92" y="259" width="1" height="1" fill="#ff0000"/><rect x="87" y="258" width="1" height="1" fill="#ff0000"/><rect x="93" y="258" width="1" height="1" fill="#ff0000"/></g><g shape-rendering="crispEdges"><rect x="342" y="148" width="1" height="20" fill="#ff0000"/><rect x="341" y="166" width="1" height="1" fill="#ff0000"/><rect x="343" y="166" width="1" height="1" fill="#ff0000"/><rect x="340" y="165" width="1" height="1" fill="#ff0000"/><rect x="344" y="165" width="1" height="1" fill="#ff0000"/><rect x="339" y="164" width="1" height="1" fill="#ff0000"/><rect x="345" y="164" width="1" height="1" fill="#ff0000"/><rect x="342" y="177" width="1" height="20" fill="#ff0000"/><rect x="341" y="178" width="1" height="1" fill="#ff0000"/><rect x="343" y="178" width="1" height="1" fill="#ff0000"/><rect x="340" y="179" width="1" height="1" fill="#ff0000"/><rect x="344" y="179" width="1" height="1" fill="#ff0000"/><rect x="339" y="180" width="1" height="1" fill="#ff0000"/><rect x="345" y="180" width="1" height="1" fill="#ff0000"/></g></svg>
<div class="a" style="left:210px;top:138px;font-weight:bold;font-size:14px;line-height:16px;color:#f00;transform-origin:0 0;transform:scaleX(1.0)">W</div>
<div class="a" style="left:207px;top:273px;font-weight:bold;font-size:14px;line-height:16px;color:#f00;transform-origin:0 0;transform:scaleX(1.0)">W1</div>
<div class="a" style="left:77px;top:211px;font-weight:bold;font-size:14px;line-height:16px;color:#f00;transform-origin:0 0;transform:scaleX(0.9)">H</div>
<div class="a" style="left:347px;top:148px;font-weight:bold;font-size:14px;line-height:16px;color:#f00;transform-origin:0 0;transform:scaleX(1.0)">T</div>
<div class="ss" style="left:440px;top:110px"><b><i style="transform:scaleX(0.71)">H</i></b><b>e</b><b>i</b><b>g</b><b>h</b><b>t</b><b>&nbsp;</b><b>(</b><b><i style="transform:scaleX(0.71)">H</i></b><b>)</b><b>:</b></div>
<div class="ss" style="left:440px;top:139px"><b><i style="transform:scaleX(0.55)">W</i></b><b>i</b><b>d</b><b>t</b><b>h</b><b>&nbsp;</b><b>(</b><b><i style="transform:scaleX(0.55)">W</i></b><b>)</b><b>:</b></div>
<div class="a" style="left:440px;top:165px;width:80px;height:18px;overflow:hidden"><div class="ss" style="left:0;top:2px"><b><i style="transform:scaleX(0.55)">W</i></b><b>i</b><b>d</b><b>t</b><b>h</b><b>1</b><br><b>(</b><b><i style="transform:scaleX(0.55)">W</i></b><b>1</b><b>)</b><b>:</b></div></div>
<div class="a" style="left:440px;top:194px;width:80px;height:18px;overflow:hidden"><div class="ss" style="left:0;top:2px"><b><i style="transform:scaleX(0.85)">T</i></b><b>h</b><b>i</b><b>c</b><b>k</b><b>n</b><b>e</b><b>s</b><b>s</b><br><b>(</b><b><i style="transform:scaleX(0.85)">T</i></b><b>)</b><b>:</b></div></div>
<div class="a" style="left:440px;top:222px;width:80px;height:32px;overflow:hidden"><div class="ss" style="left:0;top:2px"><b><i style="transform:scaleX(0.71)">D</i></b><b>i</b><b>e</b><b>l</b><b>e</b><b>c</b><b>t</b><b>r</b><b>i</b><b>c</b><br><b><i style="transform:scaleX(0.78)">C</i></b><b>o</b><b>n</b><b>s</b><b>t</b><b>a</b><b>n</b><b>t</b><br><b>(</b><b><i style="transform:scaleX(0.85)">E</i></b><b>r</b><b>)</b><b>:</b></div></div>
<div class="tb" style="left:536px;top:108px;width:96px;height:21px"></div>
<div class="a" style="left:539px;top:111px;width:19px;height:12px;background:#3399ff"></div>
<div class="ss" style="left:540px;top:113px;color:#fff;-webkit-text-stroke:0.1px #fff"><b>1</b><b>.</b><b>6</b></div>
<div class="tb" style="left:536px;top:137px;width:96px;height:21px"></div>
<div class="ss" style="left:540px;top:142px;-webkit-text-stroke:0.1px #000"><b>3</b></div>
<div class="tb" style="left:536px;top:165px;width:96px;height:21px"></div>
<div class="ss" style="left:540px;top:170px;-webkit-text-stroke:0.1px #000"><b>3</b><b>.</b><b>1</b></div>
<div class="tb" style="left:536px;top:194px;width:96px;height:21px"></div>
<div class="ss" style="left:540px;top:199px;-webkit-text-stroke:0.1px #000"><b>0</b><b>.</b><b>0</b><b>3</b><b>5</b></div>
<div class="tb" style="left:536px;top:222px;width:96px;height:21px"></div>
<div class="ss" style="left:540px;top:227px;-webkit-text-stroke:0.1px #000"><b>4</b><b>.</b><b>2</b></div>
<div class="ss" style="left:29px;top:308px"><b><i style="transform:scaleX(0.71)">N</i></b><b>o</b><b>t</b><b>e</b><b>s</b><b>:</b></div>
<div class="tb" style="left:29px;top:318px;width:375px;height:41px"></div>
<div class="ss" style="left:32px;top:323px"><b><i style="transform:scaleX(0.71)">A</i></b><b>d</b><b>d</b><b>&nbsp;</b><b>y</b><b>o</b><b>u</b><b>r</b><b>&nbsp;</b><b>c</b><b>o</b><b><i style="transform:scaleX(0.66)">m</i></b><b><i style="transform:scaleX(0.66)">m</i></b><b>e</b><b>n</b><b>t</b><b>s</b><b>&nbsp;</b><b>h</b><b>e</b><b>r</b><b>e</b></div>
<div class="a" style="left:536px;top:318px;width:96px;height:42px;border:1px solid #646464;background:#f0f0f0;box-shadow:inset 1px 1px 0 #fff, inset -1px -1px 0 #696969, inset 2px 2px 0 #e3e3e3, inset -2px -2px 0 #a0a0a0"></div>
<div class="ss" style="left:560px;top:328px"><b><i style="transform:scaleX(0.93)">P</i></b><b>r</b><b>e</b><b>s</b><b>s</b><b>&nbsp;</b><b>t</b><b>o</b></div>
<div class="ss" style="left:557px;top:340px"><b><i style="transform:scaleX(0.78)">C</i></b><b>a</b><b>l</b><b>c</b><b>u</b><b>l</b><b>a</b><b>t</b><b>e</b></div>
<div class="ss" style="left:440px;top:383px"><b>I</b><b><i style="transform:scaleX(0.66)">m</i></b><b>p</b><b>e</b><b>d</b><b>a</b><b>n</b><b>c</b><b>e</b><b>&nbsp;</b><b>(</b><b><i style="transform:scaleX(0.85)">Z</i></b><b>o</b><b>)</b></div>
<div class="ss" style="left:440px;top:410px"><b><i style="transform:scaleX(0.71)">D</i></b><b>e</b><b>l</b><b>a</b><b>y</b><b>&nbsp;</b><b>(</b><b>p</b><b>s</b><b>/</b><b>i</b><b>n</b><b>)</b></div>
<div class="tb" style="left:536px;top:378px;width:96px;height:18px;background:#f0f0f0"></div>
<div class="ss" style="left:540px;top:383px;color:#6d6d6d;-webkit-text-stroke:0.1px #6d6d6d"><b>5</b><b>0</b><b>.</b><b>3</b><b>9</b></div>
<div class="tb" style="left:536px;top:405px;width:96px;height:18px;background:#f0f0f0"></div>
<div class="ss" style="left:540px;top:410px;color:#6d6d6d;-webkit-text-stroke:0.1px #6d6d6d"><b>1</b><b>5</b><b>1</b><b>.</b><b>2</b><b>1</b></div>
<svg class="a" style="left:0;top:0" width="661" height="468" viewBox="0 0 661 468"><g fill="#000080"><path d="M30 387 H57 C62 387 65 392 65 400 C65 408 62 414 57 414 H44 V428 H30 Z M44 396.5 V404 H47 C49 404 51 402.5 51 400.2 C51 398 49 396.5 47 396.5 Z" fill-rule="evenodd"/><ellipse cx="78" cy="414" rx="16" ry="14" stroke="#f0f0f0" stroke-width="1.2"/><rect x="95" y="389" width="12" height="38"/><path d="M108 414 C108 405 114 400 124 400 H140 V427 H124 C114 427 108 422 108 414 Z M124 411 A3 3 0 1 0 124.01 411 Z" fill-rule="evenodd"/><path d="M141 400 H153 V405 C155 401 158 400 162 400 V410 C158 410 154 411 153 415 V427 H141 Z"/></g><g stroke="#fff" stroke-width="1" fill="none"><path d="M30 414.5 H69 L77 406.5 L79.5 423.5 L87 414.5 H153" stroke-width="1.5"/><path d="M107.5 400 V427 M140.5 400 V427"/></g><circle cx="124" cy="414" r="3.2" fill="#f0f0f0"/></svg>
<div class="a" style="left:180px;top:385px;width:223px;text-align:right;font-family:'Liberation Serif',serif;font-weight:bold;font-style:italic;font-size:13px;line-height:14px;letter-spacing:0.3px;color:#000080;white-space:pre">World Leaders in PCB</div>
<div class="a" style="left:180px;top:399px;width:223px;text-align:right;font-family:'Liberation Serif',serif;font-weight:bold;font-style:italic;font-size:13px;line-height:14px;letter-spacing:0.3px;color:#000080;white-space:pre">Faultfinding and Controlled</div>
<div class="a" style="left:180px;top:413px;width:223px;text-align:right;font-family:'Liberation Serif',serif;font-weight:bold;font-style:italic;font-size:13px;line-height:14px;letter-spacing:0.15px;color:#000080;white-space:pre">Impedance Measurement</div>
<div class="a" style="left:12px;top:444px;font-size:12px;line-height:15px;color:#000;-webkit-text-stroke:0.25px #000">Ready</div>
<div class="a" style="left:442px;top:445px;width:200px;height:10px;border-top:1px solid #a0a0a0;border-left:1px solid #a0a0a0;border-right:1px solid #fff;border-bottom:1px solid #fff"></div>
</body></html>
